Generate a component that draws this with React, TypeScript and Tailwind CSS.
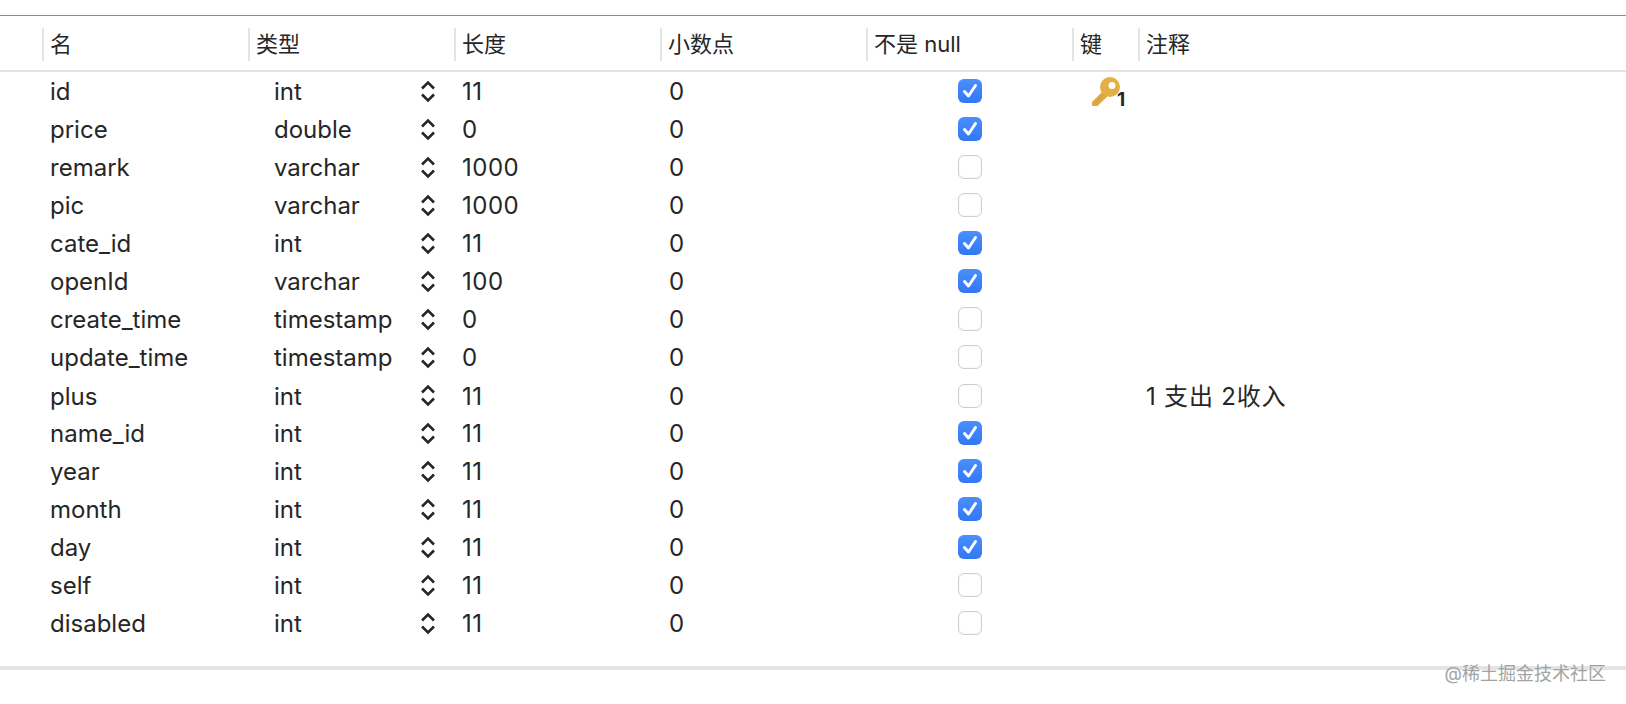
const fields = [
  { name: "id", type: "int", len: "11", notNull: true, key: true },
  { name: "price", type: "double", len: "0", notNull: true },
  { name: "remark", type: "varchar", len: "1000", notNull: false },
  { name: "pic", type: "varchar", len: "1000", notNull: false },
  { name: "cate_id", type: "int", len: "11", notNull: true },
  { name: "openId", type: "varchar", len: "100", notNull: true },
  { name: "create_time", type: "timestamp", len: "0", notNull: false },
  { name: "update_time", type: "timestamp", len: "0", notNull: false },
  { name: "plus", type: "int", len: "11", notNull: false, comment: "1 支出 2收入" },
  { name: "name_id", type: "int", len: "11", notNull: true },
  { name: "year", type: "int", len: "11", notNull: true },
  { name: "month", type: "int", len: "11", notNull: true },
  { name: "day", type: "int", len: "11", notNull: true },
  { name: "self", type: "int", len: "11", notNull: false },
  { name: "disabled", type: "int", len: "11", notNull: false },
];

const headers = ["名", "类型", "长度", "小数点", "不是 null", "键", "注释"];

const gridCols = "grid grid-cols-[42px_206px_206px_206px_206px_206px_66px_1fr]";

function Stepper() {
  return (
    <svg width="16" height="23" viewBox="0 0 16 23" fill="none" stroke="#262626" strokeWidth="2.6">
      <path d="M2 8.5 L8 2.5 L14 8.5" />
      <path d="M2 14.5 L8 20.5 L14 14.5" />
    </svg>
  );
}

function Checkbox({ checked }: { checked: boolean }) {
  if (!checked) {
    return <div className="w-6 h-6 rounded-[6px] border border-[#cfcfcf] bg-white shadow-[inset_0_0_2px_#ececec]" />;
  }
  return (
    <div className="w-6 h-6 rounded-[6px] bg-gradient-to-b from-[#4a8ffa] to-[#3277f6] flex items-center justify-center">
      <svg width="18" height="18" viewBox="0 0 18 18" fill="none" stroke="white" strokeWidth="3" strokeLinecap="round" strokeLinejoin="round">
        <path d="M3.5 9.5 L7.5 14 L14.5 3.5" />
      </svg>
    </div>
  );
}

function KeyIcon() {
  return (
    <div className="flex items-end h-[38px] pb-[1px]">
      <svg width="30" height="29" viewBox="0 0 30 29" className="mb-[3px]">
        <path d="M1 29 L1 25 L13 13 L18 18 L6.5 29 Z" fill="#deaa45" />
        <path d="M4 26 L13 17" stroke="#c99535" strokeWidth="1" />
        <circle cx="19" cy="10" r="10" fill="#e3b044" />
        <circle cx="21" cy="8.5" r="3.5" fill="white" />
      </svg>
      <span className="text-[19px] leading-none font-bold -ml-[4px]">1</span>
    </div>
  );
}

export default function App() {
  return (
    <div className="relative w-[1626px] h-[704px] overflow-hidden bg-white text-[#262626] text-[24px] font-['Inter','Noto_Sans_CJK_SC',sans-serif]">
      <div className="pt-[15px]">
        <div className="border-t border-[#8c8c8c] border-b-2 border-b-[#e4e4e4] h-[57px] pt-[12px] text-[22px]">
          <div className={gridCols}>
            <div />
            {headers.map((h) => (
              <div key={h} className="border-l-2 border-[#e4e4e4] h-[33px] pl-[6px] pb-[2px] flex items-center leading-none">
                {h}
              </div>
            ))}
          </div>
        </div>

        <div className="h-[598px] border-b-4 border-[#e4e4e4]">
          {fields.map((f) => (
            <div key={f.name} className={`${gridCols} h-[38px] items-center`}>
              <div />
              <div className="pl-[8px] pt-[2px]">{f.name}</div>
              <div className="flex items-center justify-between pl-[26px] pr-[18px]">
                <span className="pt-[2px]">{f.type}</span>
                <Stepper />
              </div>
              <div className="pl-[8px] pt-[2px] tracking-[0.5px]">{f.len}</div>
              <div className="pl-[9px] pt-[2px]">0</div>
              <div className="flex justify-center pl-[2px]">
                <Checkbox checked={f.notNull} />
              </div>
              <div className="pl-[19px]">{f.key && <KeyIcon />}</div>
              <div className="pl-[8px] pt-[3px] tracking-[0.8px]">{f.comment}</div>
            </div>
          ))}
        </div>
      </div>

      <div className="absolute right-[20px] top-[661px] text-[18px] leading-[26px] text-[#a3a3a3]">
        @稀土掘金技术社区
      </div>
    </div>
  );
}
